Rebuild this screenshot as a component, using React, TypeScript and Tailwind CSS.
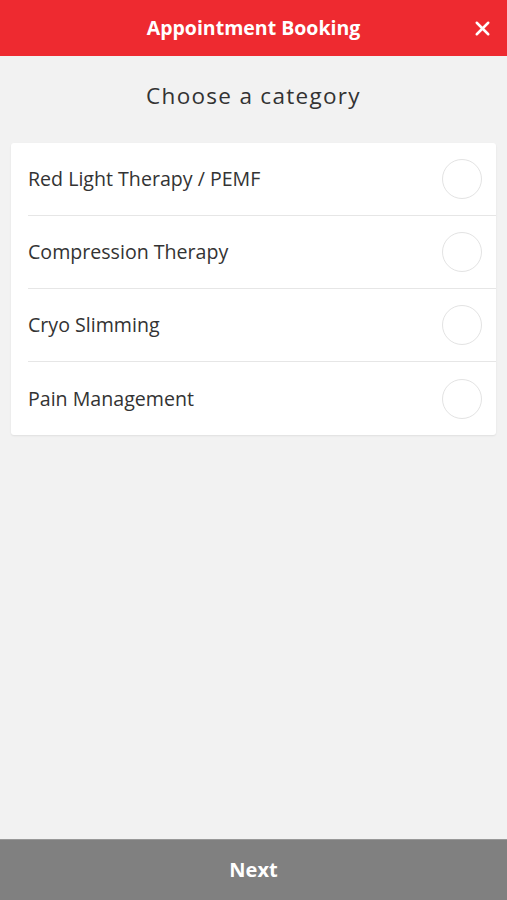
import { X } from 'lucide-react'

const categories = ['Red Light Therapy / PEMF', 'Compression Therapy', 'Cryo Slimming', 'Pain Management']

export default function App() {
  return (
    <div className="flex h-[900px] w-full flex-col bg-[#f2f2f2] font-['Open_Sans',sans-serif]">
      <header className="relative flex h-[56px] shrink-0 items-center justify-center bg-[#ee2a30]">
        <h1 className="text-[19.5px] font-bold text-white">Appointment Booking</h1>
        <button className="absolute right-[13px] top-[17px] text-white">
          <X size={23} strokeWidth={2.6} />
        </button>
      </header>

      <main className="flex-1 px-[11px] pt-[25px]">
        <h2 className="mb-[32px] text-center text-[22.5px] leading-[30px] tracking-[1.3px] text-[#333]">
          Choose a category
        </h2>
        <ul className="rounded-[3px] bg-white shadow-[0_1px_2px_rgba(0,0,0,0.08)]">
          {categories.map((c, i) => (
            <li
              key={c}
              className={`ml-[17px] flex h-[73px] items-center justify-between pr-[14px] ${i < categories.length - 1 ? 'border-b border-[#e6e6e6]' : ''}`}
            >
              <span className="text-[19.6px] text-[#333]">{c}</span>
              <span className="h-[40px] w-[40px] rounded-full border border-[#e3e3e3]" />
            </li>
          ))}
        </ul>
      </main>

      <footer className="flex h-[61px] shrink-0 items-center justify-center border-t border-[#999] bg-[#808080]">
        <span className="text-[20px] font-bold text-white">Next</span>
      </footer>
    </div>
  )
}
